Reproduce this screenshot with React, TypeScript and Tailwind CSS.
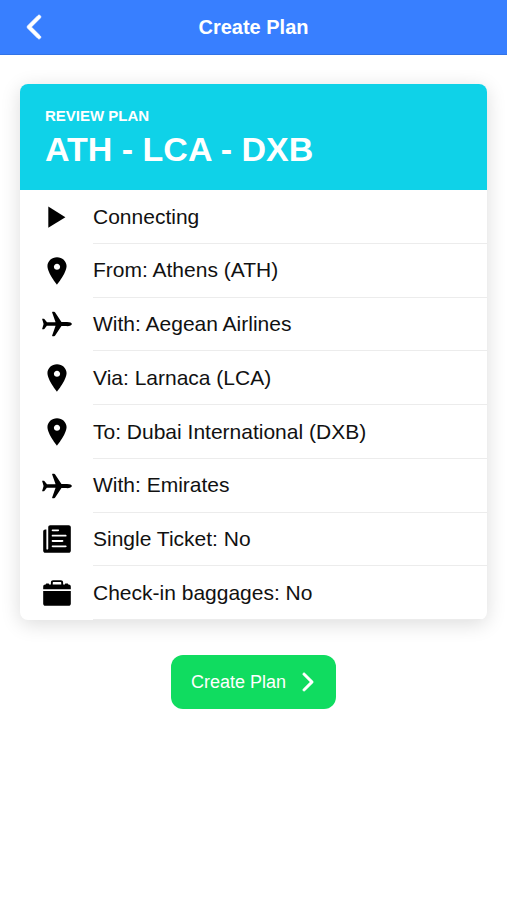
import type { ComponentType } from "react";
import {
  IoIosAirplane,
  IoIosArrowBack,
  IoIosArrowForward,
  IoIosBriefcase,
  IoIosPaper,
  IoIosPin,
} from "react-icons/io";

type Item = {
  icon: ComponentType<{ className?: string }>;
  label: string;
};

function PlayIcon({ className }: { className?: string }) {
  return (
    <svg viewBox="0 0 34 34" fill="currentColor" aria-hidden="true" className={className}>
      <path d="M8.3 6.6v21.2L25.4 17.2z" />
    </svg>
  );
}

const items: Item[] = [
  { icon: PlayIcon, label: "Connecting" },
  { icon: IoIosPin, label: "From: Athens (ATH)" },
  { icon: IoIosAirplane, label: "With: Aegean Airlines" },
  { icon: IoIosPin, label: "Via: Larnaca (LCA)" },
  { icon: IoIosPin, label: "To: Dubai International (DXB)" },
  { icon: IoIosAirplane, label: "With: Emirates" },
  { icon: IoIosPaper, label: "Single Ticket: No" },
  { icon: IoIosBriefcase, label: "Check-in baggages: No" },
];

function Header() {
  return (
    <header className="grid h-[55px] grid-cols-[1fr_auto_1fr] items-center border-b border-[#3273e6] bg-[#387fff] text-white">
      <button type="button" aria-label="Back" className="ml-4 flex w-9 justify-center">
        <IoIosArrowBack className="size-9 stroke-current stroke-[14]" />
      </button>
      <h1 className="text-xl font-bold">Create Plan</h1>
    </header>
  );
}

function PlanItem({ icon: Icon, label }: Item) {
  return (
    <li className="flex flex-1 pl-5">
      <div className="flex w-[53px] shrink-0 items-center text-black">
        <Icon className="size-[34px]" />
      </div>
      <div className="flex grow items-center border-b border-[#ececec] text-[21px]">
        {label}
      </div>
    </li>
  );
}

export default function App() {
  return (
    <div className="min-h-screen bg-white font-['Liberation_Sans',Arial,sans-serif] text-[#111]">
      <Header />

      <main className="flex flex-col items-center px-5 pt-[29px]">
        {/* Plan summary */}
        <section className="w-full overflow-hidden rounded-lg bg-white shadow-[0_4px_20px_rgba(0,0,0,0.14)]">
          <div className="bg-[#0fd2e8] px-[25px] pt-6 pb-5 text-white">
            <p className="text-[15px] leading-4 font-bold">REVIEW PLAN</p>
            <h2 className="mt-1 text-[34px] leading-[42px] font-bold">ATH - LCA - DXB</h2>
          </div>
          <ul className="flex min-h-[430px] flex-col">
            {items.map((item) => (
              <PlanItem key={item.label} {...item} />
            ))}
          </ul>
        </section>

        <button
          type="button"
          className="mt-[35px] flex h-[54px] items-center gap-2 rounded-xl bg-[#10dc60] pr-[14px] pl-5 text-lg text-white"
        >
          Create Plan
          <IoIosArrowForward className="size-7 stroke-current stroke-[8]" />
        </button>
      </main>
    </div>
  );
}
